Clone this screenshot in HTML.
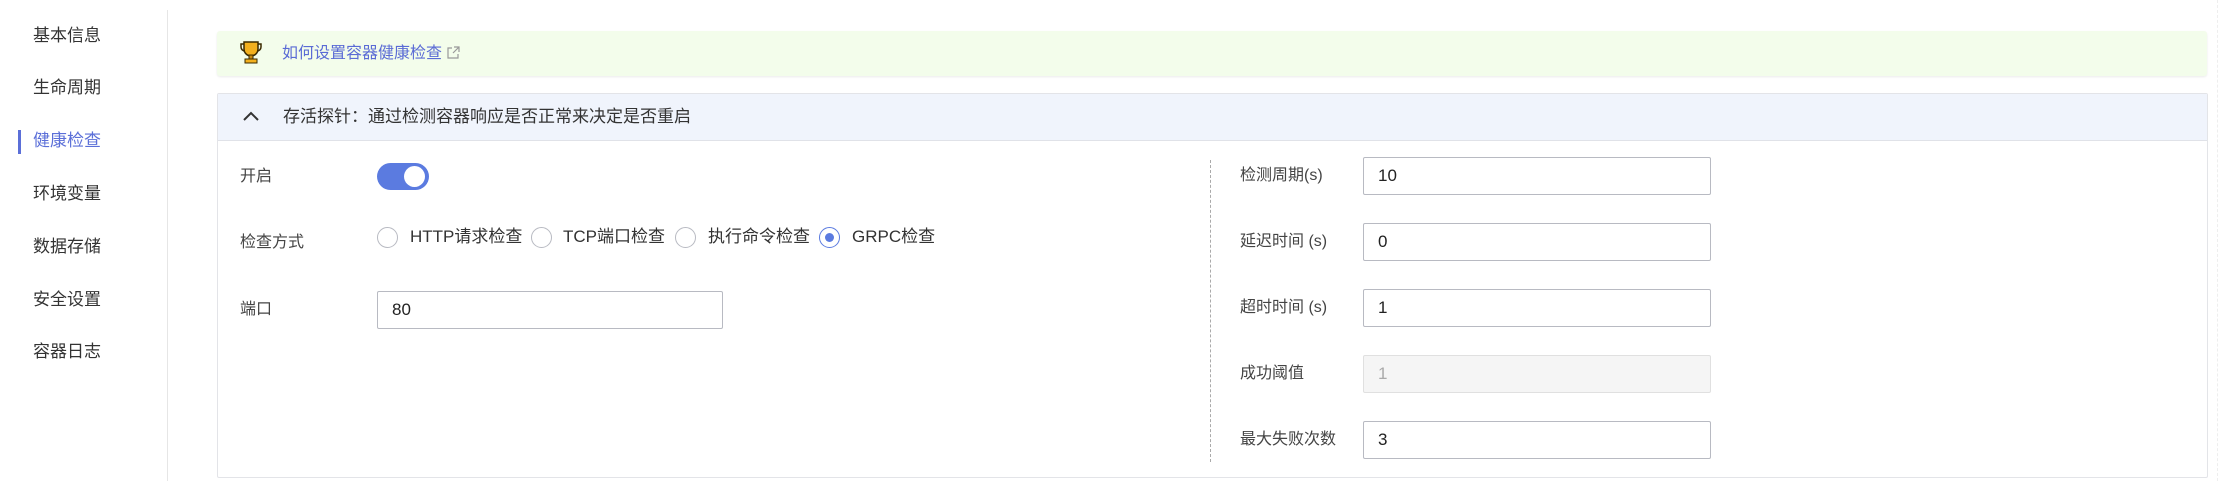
<!DOCTYPE html>
<html><head><meta charset="utf-8"><style>
*{box-sizing:border-box;margin:0;padding:0}
body{width:2226px;height:481px;background:#fff;font-family:"Liberation Sans","Noto Sans CJK SC",sans-serif;color:#333;position:relative;overflow:hidden;font-size:17px}
.a{position:absolute;white-space:nowrap}
.nav{left:33px;font-size:17px;color:#333;line-height:20px}
.inp{position:absolute;border:1px solid #b8bac2;border-radius:2px;height:38px;background:#fff;font-size:17px;line-height:36px;padding-left:14px;color:#222}
.lbl{font-size:16px;color:#444;line-height:20px}
.rad{position:absolute;width:21px;height:21px;border:1px solid #b8bac2;border-radius:50%;top:227px}
</style></head><body>
<div class="a nav" style="top:26px">基本信息</div>
<div class="a nav" style="top:78px">生命周期</div>
<div class="a nav" style="top:131px;color:#5b6fd8">健康检查</div>
<div class="a" style="left:18px;top:130px;width:3px;height:24px;background:#5b6fd8"></div>
<div class="a nav" style="top:184px">环境变量</div>
<div class="a nav" style="top:237px">数据存储</div>
<div class="a nav" style="top:290px">安全设置</div>
<div class="a nav" style="top:342px">容器日志</div>
<div class="a" style="left:167px;top:10px;width:1px;height:471px;background:#e6e6e6"></div>

<div class="a" style="left:217px;top:31px;width:1990px;height:45px;background:#f3fdeb;border-radius:3px;box-shadow:0 1px 2px rgba(0,0,0,.08)"></div>
<svg class="a" style="left:240px;top:40px" width="22" height="24" viewBox="0 0 22 24"><path d="M4 2h14v7a7 7 0 0 1-14 0z" fill="#f2b01e" stroke="#3a2a00" stroke-width="1.5"/><path d="M4 4H1v3a4 4 0 0 0 4 4M18 4h3v3a4 4 0 0 1-4 4" fill="none" stroke="#3a2a00" stroke-width="1.5"/><rect x="9" y="15" width="4" height="4" fill="#c88a10" stroke="#3a2a00"/><rect x="5" y="19" width="12" height="4" fill="#f2b01e" stroke="#3a2a00"/></svg>
<div class="a" style="left:282px;top:44px;font-size:16px;color:#5a6bd5;line-height:20px">如何设置容器健康检查</div>
<svg class="a" style="left:446px;top:46px" width="14" height="14" viewBox="0 0 14 14"><path d="M6 2H2v10h10V8M8 1h5v5M13 1L7 7" fill="none" stroke="#999" stroke-width="1.2"/></svg>

<div class="a" style="left:217px;top:93px;width:1991px;height:385px;border:1px solid #e3e4e8;border-radius:2px"></div>
<div class="a" style="left:218px;top:94px;width:1989px;height:47px;background:#f0f4fc;border-bottom:1px solid #e0e2e8"></div>
<svg class="a" style="left:242px;top:110px" width="18" height="12" viewBox="0 0 18 12"><path d="M2 10l7-7 7 7" fill="none" stroke="#333" stroke-width="2"/></svg>
<div class="a" style="left:283px;top:107px;font-size:17px;line-height:20px;color:#333">存活探针：通过检测容器响应是否正常来决定是否重启</div>

<div class="a lbl" style="left:240px;top:167px">开启</div>
<div class="a" style="left:377px;top:163px;width:52px;height:27px;border-radius:14px;background:#5b7be0"></div>
<div class="a" style="left:404px;top:166px;width:21px;height:21px;border-radius:50%;background:#fff"></div>

<div class="a lbl" style="left:240px;top:233px">检查方式</div>
<div class="rad" style="left:377px"></div>
<div class="a" style="left:410px;top:227px;line-height:20px">HTTP请求检查</div>
<div class="rad" style="left:531px"></div>
<div class="a" style="left:563px;top:227px;line-height:20px">TCP端口检查</div>
<div class="rad" style="left:675px"></div>
<div class="a" style="left:708px;top:227px;line-height:20px">执行命令检查</div>
<div class="rad" style="left:819px;border-color:#5b7be0"></div>
<div class="a" style="left:825px;top:233px;width:9px;height:9px;border-radius:50%;background:#5b7be0"></div>
<div class="a" style="left:852px;top:227px;line-height:20px">GRPC检查</div>

<div class="a lbl" style="left:240px;top:300px">端口</div>
<div class="inp" style="left:377px;top:291px;width:346px">80</div>

<div class="a" style="left:1210px;top:160px;height:302px;border-left:1px dashed #aaa"></div>
<div class="a lbl" style="left:1240px;top:166px">检测周期(s)</div>
<div class="inp" style="left:1363px;top:157px;width:348px">10</div>
<div class="a lbl" style="left:1240px;top:232px">延迟时间 (s)</div>
<div class="inp" style="left:1363px;top:223px;width:348px">0</div>
<div class="a lbl" style="left:1240px;top:298px">超时时间 (s)</div>
<div class="inp" style="left:1363px;top:289px;width:348px">1</div>
<div class="a lbl" style="left:1240px;top:364px">成功阈值</div>
<div class="inp" style="left:1363px;top:355px;width:348px;background:#f5f5f5;border-color:#e0e0e0;color:#aaa">1</div>
<div class="a lbl" style="left:1240px;top:430px">最大失败次数</div>
<div class="inp" style="left:1363px;top:421px;width:348px">3</div>
<div class="a" style="left:2217px;top:0;height:481px;border-left:1px dashed #eee"></div>
</body></html>
